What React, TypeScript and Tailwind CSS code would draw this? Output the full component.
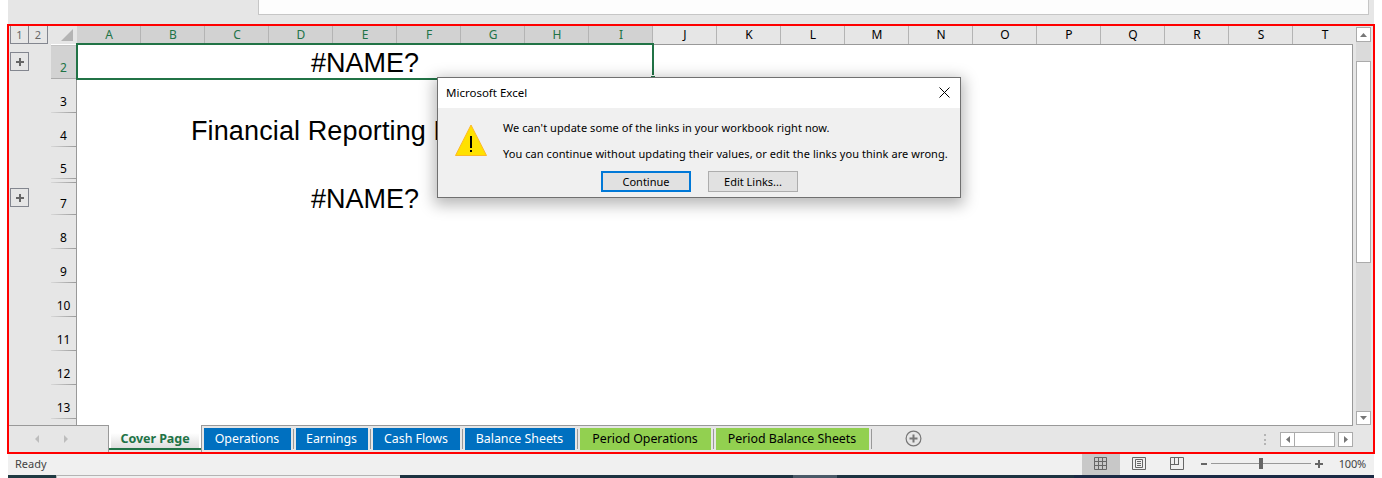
import React from "react";

const COLS = "ABCDEFGHIJKLMNOPQRST".split("");

type Row = { n: string; h: string; pb: string; text?: string; left?: boolean };
const ROWS: Row[] = [
  { n: "3", h: "h-[34px]", pb: "pb-[1px]" },
  { n: "4", h: "h-[34px]", pb: "pb-[1px]", text: "Financial Reporting P", left: true },
  { n: "5", h: "h-[32px]", pb: "pb-0" },
  { n: "", h: "h-[4px]", pb: "pb-0" },
  { n: "7", h: "h-[32px]", pb: "pb-[1px]", text: "#NAME?" },
  { n: "8", h: "h-[34px]", pb: "pb-[1px]" },
  { n: "9", h: "h-[34px]", pb: "pb-[1px]" },
  { n: "10", h: "h-[34px]", pb: "pb-[1px]" },
  { n: "11", h: "h-[34px]", pb: "pb-[1px]" },
  { n: "12", h: "h-[34px]", pb: "pb-[1px]" },
  { n: "13", h: "h-[34px]", pb: "pb-[1px]" },
];

const TABS = [
  { name: "Operations", w: "w-[87px]", c: "bg-[#0070c0] text-white" },
  { name: "Earnings", w: "w-[72px]", c: "bg-[#0070c0] text-white" },
  { name: "Cash Flows", w: "w-[87px]", c: "bg-[#0070c0] text-white" },
  { name: "Balance Sheets", w: "w-[110px]", c: "bg-[#0070c0] text-white" },
  { name: "Period Operations", w: "w-[131px]", c: "bg-[#92d050] text-black" },
  { name: "Period Balance Sheets", w: "w-[153px]", c: "bg-[#92d050] text-black" },
];

function Expand() {
  return (
    <div className="flex h-[19px] w-[19px] items-center justify-center border border-[#83868f]">
      <svg width="9" height="9" shapeRendering="crispEdges">
        <path d="M0.500 4h8v2h-8zM3.500 1h2v8h-2z" fill="#666" />
      </svg>
    </div>
  );
}

function Arrow({ d, w = 7, h = 4 }: { d: string; w?: number; h?: number }) {
  return (
    <svg width={w} height={h}>
      <path d={d} fill="#777" />
    </svg>
  );
}

function CellText({ children, left }: { children: React.ReactNode; left?: boolean }) {
  return (
    <div
      className={
        left
          ? "flex h-full w-[576px] items-end pl-[114px] font-['Liberation_Sans',Arial,sans-serif] text-[27px] leading-[31px] tracking-[0.12px] whitespace-nowrap"
          : "flex h-full w-[576px] items-end justify-center font-['Liberation_Sans',Arial,sans-serif] text-[27px] leading-[31px] whitespace-nowrap"
      }
    >
      {children}
    </div>
  );
}

function Sheet() {
  return (
    <div className="flex h-[399px]">
      <div className="flex w-[42px] shrink-0 flex-col pl-px">
        <div className="flex h-[18px] text-[11px] leading-[17px] text-[#666]">
          <div className="w-[19px] border-x border-b border-[#83868f] text-center">1</div>
          <div className="w-[19px] border-r border-b border-[#83868f] text-center">2</div>
        </div>
        <div className="pt-2"><Expand /></div>
        <div className="pt-[117px]"><Expand /></div>
      </div>
      <div className="flex w-[25px] shrink-0 flex-col">
        <div className="flex h-[18px] items-start justify-end pt-[3px] pr-[3px]">
          <svg width="12" height="12"><path d="M12 0v12H0z" fill="#b4b4b4" /></svg>
        </div>
        <div className="h-px bg-white" />
        <div className="h-px bg-[#c4c4c4]" />
        <div className="flex h-[33px] items-end justify-center border-b border-[#ababab] bg-[#d2d2d2] pb-[2px] text-[12px] leading-[17px] text-[#217346]">2</div>
        {ROWS.map((r, i) => (
          <div key={i} className={`flex flex-col ${r.h}`}>
            <div className={`flex min-h-0 flex-1 items-end justify-center text-[12px] leading-[19px] text-black ${r.pb}`}>{r.n}</div>
            <div className="h-px shrink-0 bg-linear-to-r from-[#d8d8d8] to-[#9b9b9b]" />
          </div>
        ))}
      </div>
      <div className="flex w-[1277px] shrink-0 flex-col overflow-hidden">
        <div className="flex h-[18px] w-[1277px] shrink-0 overflow-hidden pl-px">
          {COLS.map((c, i) => (
            <div
              key={c}
              className={
                i < 9
                  ? "w-16 shrink-0 border-r border-[#b4b4b4] bg-[#d2d2d2] pl-px text-center text-[12px] leading-[18px] text-[#217346]"
                  : "w-16 shrink-0 border-r border-[#b4b4b4] pl-px text-center text-[12px] leading-[18px] text-black"
              }
            >
              {c}
            </div>
          ))}
        </div>
        <div className="flex flex-1 flex-col border-x border-t border-[#999] bg-white">
          <div className="h-[34px]"><CellText>#NAME?</CellText></div>
          {ROWS.map((r, i) => (
            <div key={i} className={`shrink-0 ${r.h}`}>{r.text && <CellText left={r.left}>{r.text}</CellText>}</div>
          ))}
        </div>
      </div>
      <div className="flex w-[18px] shrink-0 flex-col pt-px pl-[3px]">
        <div className="flex h-[15px] w-[15px] items-center justify-center border border-[#ababab] bg-white"><Arrow d="M0 4L3.5 0L7 4z" /></div>
        <div className="h-[19px] w-[15px] bg-[#dadada]" />
        <div className="h-[202px] w-[15px] border border-[#ababab] bg-white" />
        <div className="h-[148px] w-[15px] bg-[#dadada]" />
        <div className="flex h-[14px] w-[15px] items-center justify-center border border-[#ababab] bg-white"><Arrow d="M0 0L3.5 4L7 0z" /></div>
      </div>
    </div>
  );
}

function TabBar() {
  return (
    <div className="flex h-[27px]">
      <div className="flex w-[100px] shrink-0 items-center border-t border-r border-[#999] pl-[26px]">
        <svg width="34" height="8"><path d="M4 0v8L0 4zM29 0v8l4-4z" fill="#bdbdbd" /></svg>
      </div>
      <div className="flex h-[25px] w-[92px] shrink-0 flex-col border-b-2 border-[#217346] bg-white px-[2px] pb-px">
        <div className="flex-1 bg-linear-to-b from-white from-35% to-[#dedede] pt-[4px] text-center text-[12.5px] leading-[19px] font-bold tracking-[-0.05px] whitespace-nowrap text-[#217346]">Cover Page</div>
      </div>
      <div className="flex flex-1 border-l border-[#999]">
        <div className="flex w-[1151px] border-t border-[#999] pt-[2px] pl-[2px]">
          {TABS.map((t) => (
            <div key={t.name} className="flex shrink-0">
              <div className={`h-[22px] pr-px text-center text-[12.4px] leading-[21px] tracking-[-0.03px] whitespace-nowrap ${t.w} ${t.c}`}>{t.name}</div>
              <div className="mt-px mr-[2px] ml-[2px] h-[20px] w-px bg-[#999]" />
            </div>
          ))}
          <svg className="mt-[2px] ml-[31px]" width="17" height="17" fill="none" stroke="#777">
            <circle cx="8.5" cy="8.5" r="7.4" strokeWidth="1.2" />
            <path d="M4.5 8.5h8M8.5 4.5v8" strokeWidth="2" />
          </svg>
          <div className="mt-[6px] ml-auto flex flex-col gap-[2px] pr-[14px]">
            <div className="h-[2px] w-[2px] bg-[#b4b4b4]" />
            <div className="mt-px h-[2px] w-[2px] bg-[#b4b4b4]" />
            <div className="h-[2px] w-[2px] bg-[#b4b4b4]" />
          </div>
          <div className="mt-[4px] flex h-[15px]">
            <div className="flex w-[15px] items-center justify-center border border-[#ababab] bg-white"><Arrow d="M4 0v7L0 3.5z" w={4} h={7} /></div>
            <div className="w-[40px] border-y border-r border-[#ababab] bg-white" />
            <div className="ml-[3px] flex w-[15px] items-center justify-center border border-[#ababab] bg-white"><Arrow d="M0 0v7l4-3.5z" w={4} h={7} /></div>
          </div>
        </div>
      </div>
    </div>
  );
}

function StatusBar() {
  return (
    <div className="ml-2 flex h-[21px] w-[1366px] bg-[#f0f0f0] text-[#444]">
      <div className="pl-[7px] text-[11px] leading-[20px]">Ready</div>
      <div className="ml-auto flex h-[21px] w-[38px] justify-center bg-[#c8c8c8] pt-[3px]">
        <svg width="14" height="14" fill="none" stroke="#666"><path d="M.5 .5h12v12H.5zM4.5 0v13M8.5 0v13M0 4.5h13M0 8.5h13" /></svg>
      </div>
      <svg className="mt-[3px] ml-[12px]" width="14" height="13" fill="none" stroke="#666"><path d="M.5 .5h13v12H.5zM3.5 2.5h7v8h-7zM5 4.5h4M5 6.5h4M5 8.5h4" /></svg>
      <svg className="mt-[3px] ml-[24px]" width="14" height="13" fill="none" stroke="#666"><path d="M.5 .5h13v12H.5zM4.5 0v7.5M8.5 0v7.5M0 7.5h9" /></svg>
      <svg className="mt-[3px] ml-[16px]" width="124" height="14" shapeRendering="crispEdges">
        <path d="M1 6h6v2H1zM115 6h8v2h-8zM118 3h2v8h-2zM59 1h4v11h-4z" fill="#666" />
        <path d="M11 6h48v1H11zM63 6h48v1H63z" fill="#999" />
      </svg>
      <div className="w-[50px] pr-[8px] text-right text-[11px] leading-[19px] tracking-[-0.2px]">100%</div>
    </div>
  );
}

function Dialog() {
  return (
    <div className="absolute top-[77px] left-[437px] flex h-[121px] w-[524px] flex-col border border-[#707070] bg-[#f0f0f0] text-[11px] text-black shadow-[0_4px_14px_3px_rgba(0,0,0,0.28)]">
      <div className="flex h-[30px] items-center justify-between bg-white pr-[10px] pl-[8px]">
        <span className="text-[11.5px]">Microsoft Excel</span>
        <svg className="-mt-[2px]" width="11" height="11" stroke="#000"><path d="M.5 .5l10 10M10.500 .5l-10 10" /></svg>
      </div>
      <div className="flex pt-[12px] pl-[17px]">
        <svg className="mt-[4px]" width="32" height="32">
          <path d="M16 1L31.500 31.500H.5z" fill="#ffe100" stroke="#fdb827" />
          <path d="M15 12h2v12h-2zM15 26h2v2h-2z" fill="#000" />
        </svg>
        <div className="ml-[16px] leading-[16px] tracking-[0.065px] whitespace-nowrap">
          <p>We can't update some of the links in your workbook right now.</p>
          <p className="mt-[10px]">You can continue without updating their values, or edit the links you think are wrong.</p>
        </div>
      </div>
      <div className="mt-[9px] flex gap-[17px] pl-[163px] text-center">
        <button className="h-[21px] w-[90px] border-2 border-[#0078d7] bg-[#e1e1e1] leading-[17px]">Continue</button>
        <button className="h-[21px] w-[90px] border border-[#adadad] bg-[#e1e1e1] leading-[19px]">Edit Links...</button>
      </div>
    </div>
  );
}

export default function App() {
  return (
    <div className="relative h-[478px] w-[1382px] overflow-hidden bg-white font-['Noto_Sans',sans-serif]">
      <div className="ml-2 h-6 w-[1366px] bg-[#e6e6e6] pl-[250px]">
        <div className="h-[15px] w-[1111px] border-x border-b border-[#c6c6c6] bg-[#fdfdfd]" />
      </div>
      <div className="ml-[7px] h-[430px] w-[1368px] border-2 border-[#ff0000] bg-[#e6e6e6]">
        <Sheet />
        <TabBar />
      </div>
      <StatusBar />
      <div className="ml-2 flex h-[3px] w-[1366px] bg-[#1d3341]">
        <div className="w-[48px] bg-[#1f3a42]" />
        <div className="w-[344px] border-t border-l border-[#b4b4b4] bg-[#f0f0f0]" />
        <div className="ml-[393px] w-[44px] bg-[#4a5a68]" />
        <div className="ml-auto w-[300px] bg-[#1a2a44]" />
      </div>
      <div className="pointer-events-none absolute top-[43px] left-[76px] h-[37px] w-[578px] border-2 border-[#217346]" />
      <div className="absolute top-[75px] left-[650px] h-[5px] w-[5px] border-t border-l border-white bg-[#217346]" />
      <Dialog />
    </div>
  );
}
